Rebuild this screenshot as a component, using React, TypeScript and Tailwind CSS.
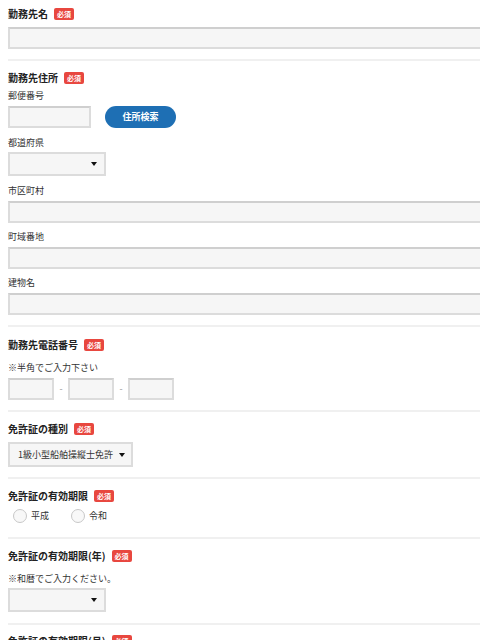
import type { ReactNode } from 'react'

const font = { fontFamily: '"Noto Sans CJK JP", "Noto Sans", sans-serif' }

function Badge() {
  return (
    <span className="inline-flex h-[12px] w-[20px] items-center justify-center rounded-[2px] bg-[#e8473f] text-[7px] font-bold leading-none text-white">
      必須
    </span>
  )
}

function Title({ children, required = true }: { children: ReactNode; required?: boolean }) {
  return (
    <div className="flex h-[14px] items-center gap-[6px] text-[10px] font-bold leading-[14px] text-[#222]">
      <span>{children}</span>
      {required && <Badge />}
    </div>
  )
}

function Label({ children, className = '' }: { children: ReactNode; className?: string }) {
  return <div className={`h-[12px] text-[9px] leading-[12px] text-[#333] ${className}`}>{children}</div>
}

function Input({ className = '' }: { className?: string }) {
  return (
    <div
      className={`h-[22px] border-2 border-[#dcdcdc] border-t-[#cfcfcf] bg-[#f6f6f6] ${className}`}
    />
  )
}

function Select({ value = '', className = '' }: { value?: string; className?: string }) {
  return (
    <div
      className={`flex h-[24px] items-center justify-between gap-[6px] border-2 border-[#dcdcdc] bg-[#f6f6f6] pl-[7px] pr-[7px] ${className}`}
    >
      <span className="whitespace-nowrap text-[9px] leading-none text-[#333]">{value}</span>
      <span className="h-0 w-0 shrink-0 border-x-[3.5px] border-t-[4px] border-x-transparent border-t-[#111]" />
    </div>
  )
}

function Divider({ className = '' }: { className?: string }) {
  return <div className={`h-[2px] bg-[#f0f0f0] ${className}`} />
}

function Radio({ label }: { label: string }) {
  return (
    <label className="flex items-center gap-[4px] text-[9px] text-[#333]">
      <span className="h-[14px] w-[14px] rounded-full border border-[#c8c8c8] bg-[#f8f8f8]" />
      <span>{label}</span>
    </label>
  )
}

export default function App() {
  return (
    <div className="h-[640px] w-full overflow-hidden bg-white" style={font}>
      <div className="w-[500px] pl-2">
        {/* 勤務先名 */}
        <section className="pt-[7px]">
          <Title>勤務先名</Title>
          <Input className="mt-[6px]" />
        </section>
        <Divider className="mt-[10px]" />

        {/* 勤務先住所 */}
        <section className="pt-[10px]">
          <Title>勤務先住所</Title>
          <Label className="mt-[5px]">郵便番号</Label>
          <div className="mt-[4px] flex h-[22px] items-center gap-[14px]">
            <Input className="h-[21px] w-[83px]" />
            <button className="h-[22px] w-[71px] rounded-full bg-[#1e6fb4] text-[9px] font-bold text-white">
              住所検索
            </button>
          </div>
          <Label className="mt-[9px]">都道府県</Label>
          <Select className="mt-[3px] w-[98px]" />
          <Label className="mt-[9px]">市区町村</Label>
          <Input className="mt-[4px]" />
          <Label className="mt-[8px]">町域番地</Label>
          <Input className="mt-[4px]" />
          <Label className="mt-[8px]">建物名</Label>
          <Input className="mt-[4px]" />
        </section>
        <Divider className="mt-[10px]" />

        {/* 勤務先電話番号 */}
        <section className="pt-[11px]">
          <Title>勤務先電話番号</Title>
          <Label className="mt-[10px]">※半角でご入力下さい</Label>
          <div className="mt-[4px] flex items-center gap-[4px]">
            <Input className="w-[46px]" />
            <span className="w-[6px] text-center text-[9px] text-[#999]">-</span>
            <Input className="w-[46px]" />
            <span className="w-[6px] text-center text-[9px] text-[#999]">-</span>
            <Input className="w-[46px]" />
          </div>
        </section>
        <Divider className="mt-[10px]" />

        {/* 免許証の種別 */}
        <section className="pt-[10px]">
          <Title>免許証の種別</Title>
          <Select value="1級小型船舶操縦士免許" className="mt-[6px] h-[25px] w-fit !pl-[8px] !pr-[6px]" />
        </section>
        <Divider className="mt-[10px]" />

        {/* 免許証の有効期限 */}
        <section className="pt-[10px]">
          <Title>免許証の有効期限</Title>
          <div className="mt-[5px] flex h-[16px] items-center gap-[22px] pl-[5px]">
            <Radio label="平成" />
            <Radio label="令和" />
          </div>
        </section>
        <Divider className="mt-[13px]" />

        {/* 免許証の有効期限(年) */}
        <section className="pt-[10px]">
          <Title>免許証の有効期限(年)</Title>
          <Label className="mt-[10px]">※和暦でご入力ください。</Label>
          <Select className="mt-[3px] w-[98px]" />
        </section>
        <Divider className="mt-[11px]" />

        {/* 免許証の有効期限(月) */}
        <section className="pt-[9px]">
          <Title>免許証の有効期限(月)</Title>
          <Select className="mt-[6px] w-[98px]" />
        </section>
      </div>
    </div>
  )
}
